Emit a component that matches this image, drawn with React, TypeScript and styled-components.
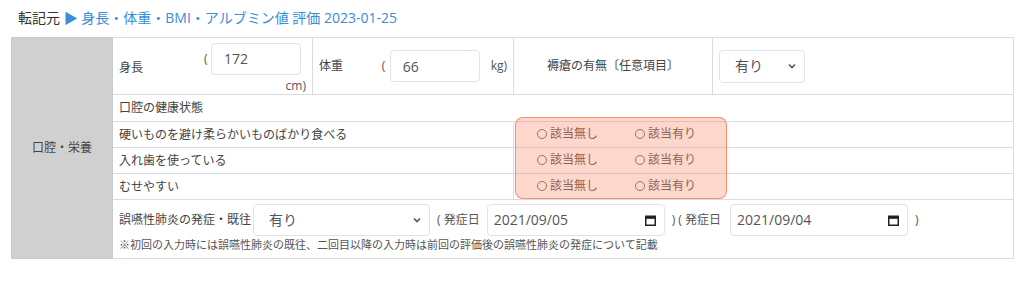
import { FC, ReactNode } from 'react';
import styled, { createGlobalStyle } from 'styled-components';

const GlobalStyle = createGlobalStyle`
  body {
    margin: 0;
    background: #ffffff;
    font-family: "Open Sans", "Noto Sans CJK JP", sans-serif;
    color: #444;
  }
`;

const ORAL_ITEMS = [
  '硬いものを避け柔らかいものばかり食べる',
  '入れ歯を使っている',
  'むせやすい',
];

const Chevron: FC = () => (
  <svg width="8" height="6" viewBox="0 0 8 6">
    <path d="M1 1.5 L4 4.5 L7 1.5" fill="none" stroke="#555" strokeWidth="1.6" />
  </svg>
);

const CalendarIcon: FC = () => (
  <svg width="11" height="11" viewBox="0 0 11 11">
    <rect x="0.75" y="1.25" width="9.5" height="9" fill="none" stroke="#222" strokeWidth="1.5" />
    <rect x="0.75" y="1.25" width="9.5" height="2.6" fill="#222" />
  </svg>
);

const SelectBox: FC<{ width: number; children: ReactNode }> = ({ width, children }) => (
  <SelectWrap style={{ width }}>
    <SelectValue>{children}</SelectValue>
    <Chevron />
  </SelectWrap>
);

const DateBox: FC<{ value: string }> = ({ value }) => (
  <DateWrap>
    <span>{value}</span>
    <CalendarIcon />
  </DateWrap>
);

const App: FC = () => {
  return (
    <Page>
      <GlobalStyle />
      <Heading>
        転記元 <Source>▶ 身長・体重・BMI・アルブミン値 評価 2023-01-25</Source>
      </Heading>

      <SheetWrap>
        <Sheet>
          <colgroup>
            <col style={{ width: 101 }} />
            <col style={{ width: 200 }} />
            <col style={{ width: 201 }} />
            <col style={{ width: 199 }} />
            <col style={{ width: 301 }} />
          </colgroup>
          <tbody>
            <tr>
              <GroupCell rowSpan={6}>口腔・栄養</GroupCell>
              <Cell $height={57}>
                <HeightGrid>
                  <HeightLabel>身長</HeightLabel>
                  <Paren>(</Paren>
                  <NumberInput value="172" readOnly />
                  <Unit>cm)</Unit>
                </HeightGrid>
              </Cell>
              <Cell>
                <MeasureRow>
                  <MeasureLabel>体重</MeasureLabel>
                  <Paren>(</Paren>
                  <NumberInput value="66" readOnly />
                  <UnitInline>kg)</UnitInline>
                </MeasureRow>
              </Cell>
              <Cell $center>褥瘡の有無〔任意項目〕</Cell>
              <Cell>
                <SelectBox width={86}>有り</SelectBox>
              </Cell>
            </tr>
            <tr>
              <Cell colSpan={4} $height={27}>
                口腔の健康状態
              </Cell>
            </tr>
            {ORAL_ITEMS.map((item) => (
              <tr key={item}>
                <Cell colSpan={2} $height={26}>
                  {item}
                </Cell>
                <ChoiceCell colSpan={2}>
                  <Choice>
                    <Dot />
                    該当無し
                  </Choice>
                  <Choice>
                    <Dot />
                    該当有り
                  </Choice>
                </ChoiceCell>
              </tr>
            ))}
            <tr>
              <Cell colSpan={4} $height={59} $top>
                <HistoryRow>
                  <span>誤嚥性肺炎の発症・既往</span>
                  <SelectBox width={177}>有り</SelectBox>
                  <Onset>(&nbsp;発症日</Onset>
                  <DateBox value="2021/09/05" />
                  <Onset $after>)&nbsp;(&nbsp;発症日</Onset>
                  <DateBox value="2021/09/04" />
                  <Onset>)</Onset>
                </HistoryRow>
                <Note>
                  ※初回の入力時には誤嚥性肺炎の既往、二回目以降の入力時は前回の評価後の誤嚥性肺炎の発症について記載
                </Note>
              </Cell>
            </tr>
          </tbody>
        </Sheet>
        <Highlight />
      </SheetWrap>
    </Page>
  );
};

export default App;

const Page = styled.div`
  width: 1024px;
  height: 284px;
  padding: 8px 0 0 11px;
  box-sizing: border-box;
`;

const Heading = styled.div`
  padding-left: 7px;
  font-size: 14px;
  line-height: 20px;
  color: #333;
  margin-bottom: 9px;
`;

const Source = styled.span`
  color: #3a8dd6;
`;

const SheetWrap = styled.div`
  position: relative;
  width: 1003px;
`;

const Sheet = styled.table`
  width: 1003px;
  border-collapse: collapse;
  table-layout: fixed;
  border: 1px solid #c5ccd5;
  font-size: 12px;
  line-height: 16px;
`;

const GroupCell = styled.td`
  background: #d0d0d0;
  text-align: center;
  vertical-align: middle;
  color: #444;
  border: 1px solid #c5ccd5;
  padding: 0;
`;

const Cell = styled.td<{ $height?: number; $center?: boolean; $top?: boolean }>`
  height: ${(p) => (p.$height ? `${p.$height}px` : 'auto')};
  padding: ${(p) => (p.$top ? '4px 6px 0' : '0 6px')};
  border: 1px solid #d8dde3;
  vertical-align: ${(p) => (p.$top ? 'top' : 'middle')};
  text-align: ${(p) => (p.$center ? 'center' : 'left')};
  box-sizing: border-box;
  color: #444;
`;

const ChoiceCell = styled.td`
  padding: 0 0 0 23px;
  border: 1px solid #d8dde3;
  vertical-align: middle;
  white-space: nowrap;
`;

const HeightGrid = styled.div`
  display: grid;
  grid-template-columns: 85px 7px 90px;
  grid-template-rows: auto auto;
  align-items: center;
  padding-top: 4px;
`;

const HeightLabel = styled.span`
  grid-row: 1 / span 2;
  align-self: center;
`;

const Paren = styled.span`
  width: 8px;
  color: #555;
`;

const NumberInput = styled.input`
  width: 90px;
  height: 32px;
  box-sizing: border-box;
  border: 1px solid #dfe3e8;
  border-radius: 4px;
  padding: 0 12px;
  font-family: inherit;
  font-size: 14px;
  color: #555;
  outline: none;
  background: #fff;
`;

const Unit = styled.span`
  grid-column: 2 / -1;
  grid-row: 2;
  justify-self: end;
  margin-right: -5px;
  line-height: 16px;
  padding-top: 3px;
  color: #555;
`;

const MeasureRow = styled.div`
  display: flex;
  align-items: center;
`;

const MeasureLabel = styled.span`
  width: 64px;
`;

const UnitInline = styled.span`
  margin-left: 11px;
  color: #555;
`;

const SelectWrap = styled.div`
  height: 33px;
  box-sizing: border-box;
  border: 1px solid #e0e4e9;
  border-radius: 4px;
  padding: 0 8px 0 15px;
  display: flex;
  align-items: center;
  justify-content: space-between;
  background: #fff;
`;

const SelectValue = styled.span`
  font-size: 14px;
  color: #555;
`;

const Choice = styled.span`
  display: inline-flex;
  align-items: center;
  gap: 3px;
  width: 98px;
  font-size: 12px;
  color: #555;
`;

const Dot = styled.span`
  width: 10px;
  height: 10px;
  box-sizing: border-box;
  border: 1px solid #6b6b6b;
  border-radius: 50%;
  background: #fff;
`;

const HistoryRow = styled.div`
  display: flex;
  align-items: center;
  white-space: nowrap;

  > ${SelectWrap} {
    margin-left: 2px;
    height: 32px;
  }
`;

const Onset = styled.span<{ $after?: boolean }>`
  margin: 0 ${(p) => (p.$after ? 9 : 7)}px 0 7px;
  color: #555;
`;

const DateWrap = styled.div`
  width: 178px;
  height: 32px;
  box-sizing: border-box;
  border: 1px solid #e0e4e9;
  border-radius: 4px;
  padding: 0 8px 0 6px;
  display: flex;
  align-items: center;
  justify-content: space-between;
  font-size: 14px;
  color: #555;
`;

const Note = styled.div`
  font-size: 11px;
  line-height: 14px;
  margin-top: 2px;
  color: #555;
  white-space: nowrap;
`;

const Highlight = styled.div`
  position: absolute;
  left: 504px;
  top: 80px;
  width: 212px;
  height: 82px;
  box-sizing: border-box;
  border: 1.5px solid rgba(240, 120, 70, 0.75);
  border-radius: 8px;
  background: rgba(248, 130, 95, 0.32);
  pointer-events: none;
`;
